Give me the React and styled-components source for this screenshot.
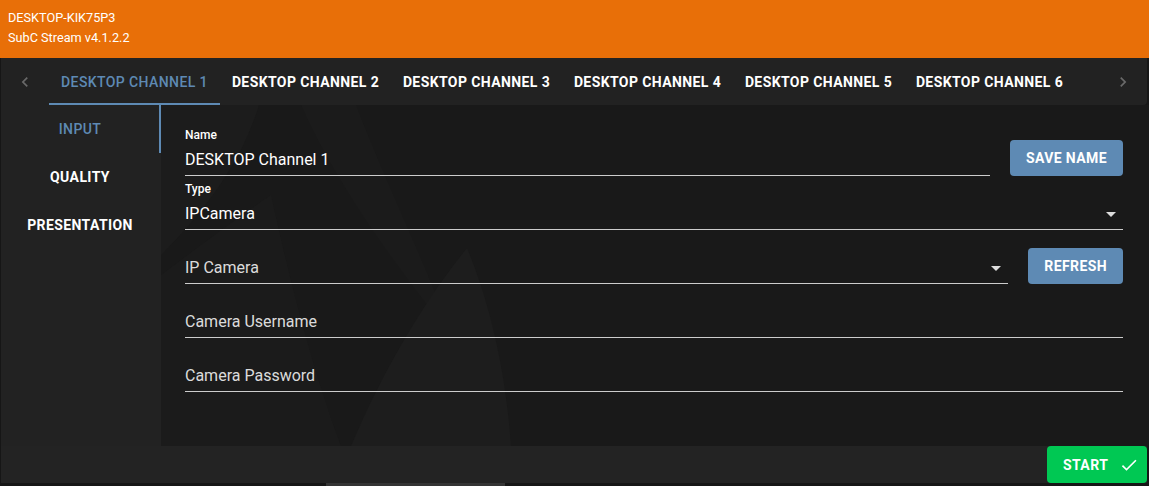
import React from "react";
import styled, { createGlobalStyle } from "styled-components";

const GlobalStyle = createGlobalStyle`
  html, body {
    margin: 0;
    padding: 0;
    background: #161616;
    overflow: hidden;
  }
  body {
    font-family: Roboto, "Liberation Sans", Arial, sans-serif;
    -webkit-font-smoothing: antialiased;
  }
  * { box-sizing: border-box; }
`;

const Page = styled.div`
  width: 1149px;
  height: 486px;
  display: flex;
  flex-direction: column;
  background: #161616;
`;

const Header = styled.header`
  height: 58px;
  flex: none;
  background: #e86f08;
  padding: 8px 8px 10px;
  color: #ffffff;
  font-size: 12.7px;
  line-height: 20px;
`;

const HeaderLine = styled.div`
  white-space: nowrap;
`;

const TabBar = styled.nav`
  height: 47px;
  flex: none;
  margin: 0 2px 0 1px;
  background: #222222;
  border-bottom-right-radius: 4px;
  display: flex;
  align-items: stretch;
`;

const ScrollButton = styled.div`
  width: 48px;
  flex: none;
  display: flex;
  align-items: center;
  justify-content: center;
  color: rgba(255, 255, 255, 0.32);
`;

const TabList = styled.div`
  flex: 1;
  display: flex;
  overflow: hidden;
`;

const Tab = styled.div`
  flex: none;
  width: 171px;
  display: flex;
  align-items: center;
  justify-content: center;
  padding-top: 2px;
  border-bottom: 2px solid ${(p) => (p.$active ? "#5e8ab4" : "transparent")};
  color: ${(p) => (p.$active ? "#5e8ab4" : "#ffffff")};
  font-size: 14px;
  letter-spacing: 0.4px;
  font-weight: ${(p) => (p.$active ? 500 : 700)};
  text-transform: uppercase;
  white-space: nowrap;
`;

const Body = styled.div`
  flex: 1;
  display: flex;
  margin-left: 1px;
  min-height: 0;
`;

const SideNav = styled.aside`
  width: 160px;
  flex: none;
  background: #222222;
  display: flex;
  flex-direction: column;
`;

const NavItem = styled.div`
  height: 48px;
  display: flex;
  align-items: center;
  justify-content: center;
  border-right: 2px solid ${(p) => (p.$active ? "#5e8ab4" : "transparent")};
  color: ${(p) => (p.$active ? "#5e8ab4" : "#ffffff")};
  font-size: 14px;
  letter-spacing: 0.4px;
  font-weight: ${(p) => (p.$active ? 500 : 700)};
  text-transform: uppercase;
`;

const Content = styled.main`
  flex: 1;
  position: relative;
  overflow: hidden;
  background: #191919;
  padding: 17px 26px 0 24px;
`;

const Watermark = styled.svg`
  position: absolute;
  left: 0;
  top: 0;
  width: 100%;
  height: 100%;
  pointer-events: none;
`;

const Form = styled.div`
  position: relative;
  display: flex;
  flex-direction: column;
`;

const Row = styled.div`
  display: flex;
  align-items: flex-end;
  gap: 20px;
`;

const Field = styled.div`
  flex: 1;
  display: flex;
  flex-direction: column;
  border-bottom: 1px solid rgba(255, 255, 255, 0.78);
`;

const Label = styled.div`
  margin-top: 6px;
  margin-bottom: 4px;
  height: 14px;
  font-size: 12px;
  line-height: 14px;
  font-weight: 500;
  color: #ffffff;
`;

const InputWrap = styled.div`
  position: relative;
  padding: 4px ${(p) => (p.$select ? "24px" : "0")} 6px 0;
`;

const InputText = styled.div`
  font-size: 16px;
  line-height: 19px;
  height: 19px;
  color: ${(p) => (p.$placeholder ? "rgba(255,255,255,0.86)" : "#ffffff")};
  white-space: nowrap;
`;

const DropArrow = styled.svg`
  position: absolute;
  right: 0;
  top: 2px;
  width: 24px;
  height: 24px;
  fill: rgba(255, 255, 255, 0.85);
`;

const ActionButton = styled.button`
  flex: none;
  height: 36px;
  padding: 0 16px;
  border: none;
  border-radius: 4px;
  background: #5e8ab4;
  color: #ffffff;
  font-family: inherit;
  font-size: 14px;
  letter-spacing: 0.4px;
  font-weight: 700;
  text-transform: uppercase;
  cursor: pointer;
`;

const Footer = styled.footer`
  height: 37px;
  flex: none;
  margin: 0 2px 0 1px;
  background: #232323;
  display: flex;
  justify-content: flex-end;
`;

const StartButton = styled.button`
  width: 100px;
  height: 100%;
  border: none;
  border-radius: 4px;
  background: #00c853;
  color: #ffffff;
  font-family: inherit;
  font-size: 14px;
  letter-spacing: 0.4px;
  font-weight: 700;
  text-transform: uppercase;
  display: flex;
  align-items: center;
  padding: 0 0 0 16px;
  gap: 11px;
  cursor: pointer;
`;

const ScrollTrack = styled.div`
  height: 3px;
  flex: none;
  display: flex;
  padding-left: 326px;
`;

const ScrollThumb = styled.div`
  width: 179px;
  background: #343434;
`;

const ChevronLeft = () => (
  <svg width="20" height="20" viewBox="0 0 24 24" fill="currentColor">
    <path d="M15.41 16.59 10.83 12l4.58-4.59L14 6l-6 6 6 6z" />
  </svg>
);

const ChevronRight = () => (
  <svg width="20" height="20" viewBox="0 0 24 24" fill="currentColor">
    <path d="M8.59 16.59 13.17 12 8.59 7.41 10 6l6 6-6 6z" />
  </svg>
);

const Arrow = () => (
  <DropArrow viewBox="0 0 24 24">
    <path d="M7 10l5 5 5-5z" />
  </DropArrow>
);

const CheckIcon = () => (
  <svg width="20" height="20" viewBox="0 0 24 24" fill="#ffffff">
    <path d="M9 16.17 4.83 12l-1.42 1.41L9 19 21 7l-1.41-1.41z" />
  </svg>
);

const tabs = [1, 2, 3, 4, 5, 6].map((n) => `Desktop Channel ${n}`);
const navItems = ["Input", "Quality", "Presentation"];

export default function App() {
  return (
    <>
      <GlobalStyle />
      <Page>
        <Header>
          <HeaderLine>DESKTOP-KIK75P3</HeaderLine>
          <HeaderLine>SubC Stream v4.1.2.2</HeaderLine>
        </Header>
        <TabBar>
          <ScrollButton>
            <ChevronLeft />
          </ScrollButton>
          <TabList>
            {tabs.map((t, i) => (
              <Tab key={t} $active={i === 0}>
                {t}
              </Tab>
            ))}
          </TabList>
          <ScrollButton>
            <ChevronRight />
          </ScrollButton>
        </TabBar>
        <Body>
          <SideNav>
            {navItems.map((n, i) => (
              <NavItem key={n} $active={i === 0}>
                {n}
              </NavItem>
            ))}
          </SideNav>
          <Content>
            <Watermark viewBox="0 0 988 341" preserveAspectRatio="none">
              <path d="M0 0 L98 0 C80 60 40 110 0 150 Z" fill="#1c1c1c" />
              <path d="M140 0 L195 0 C230 90 270 170 290 230 C250 180 180 90 140 0 Z" fill="#1b1b1b" />
              <path d="M0 170 C40 140 80 110 110 90 C130 180 150 260 180 341 L0 341 Z" fill="#1b1b1b" />
              <path d="M306 143 C330 200 345 270 350 341 L190 341 C220 270 260 200 306 143 Z" fill="#1d1d1d" />
            </Watermark>
            <Form>
              <Row>
                <Field>
                  <Label>Name</Label>
                  <InputWrap>
                    <InputText>DESKTOP Channel 1</InputText>
                  </InputWrap>
                </Field>
                <ActionButton>Save Name</ActionButton>
              </Row>
              <Row>
                <Field>
                  <Label>Type</Label>
                  <InputWrap $select>
                    <InputText>IPCamera</InputText>
                    <Arrow />
                  </InputWrap>
                </Field>
              </Row>
              <Row>
                <Field>
                  <Label />
                  <InputWrap $select>
                    <InputText $placeholder>IP Camera</InputText>
                    <Arrow />
                  </InputWrap>
                </Field>
                <ActionButton>Refresh</ActionButton>
              </Row>
              <Row>
                <Field>
                  <Label />
                  <InputWrap>
                    <InputText $placeholder>Camera Username</InputText>
                  </InputWrap>
                </Field>
              </Row>
              <Row>
                <Field>
                  <Label />
                  <InputWrap>
                    <InputText $placeholder>Camera Password</InputText>
                  </InputWrap>
                </Field>
              </Row>
            </Form>
          </Content>
        </Body>
        <Footer>
          <StartButton>
            Start
            <CheckIcon />
          </StartButton>
        </Footer>
        <ScrollTrack>
          <ScrollThumb />
        </ScrollTrack>
      </Page>
    </>
  );
}
